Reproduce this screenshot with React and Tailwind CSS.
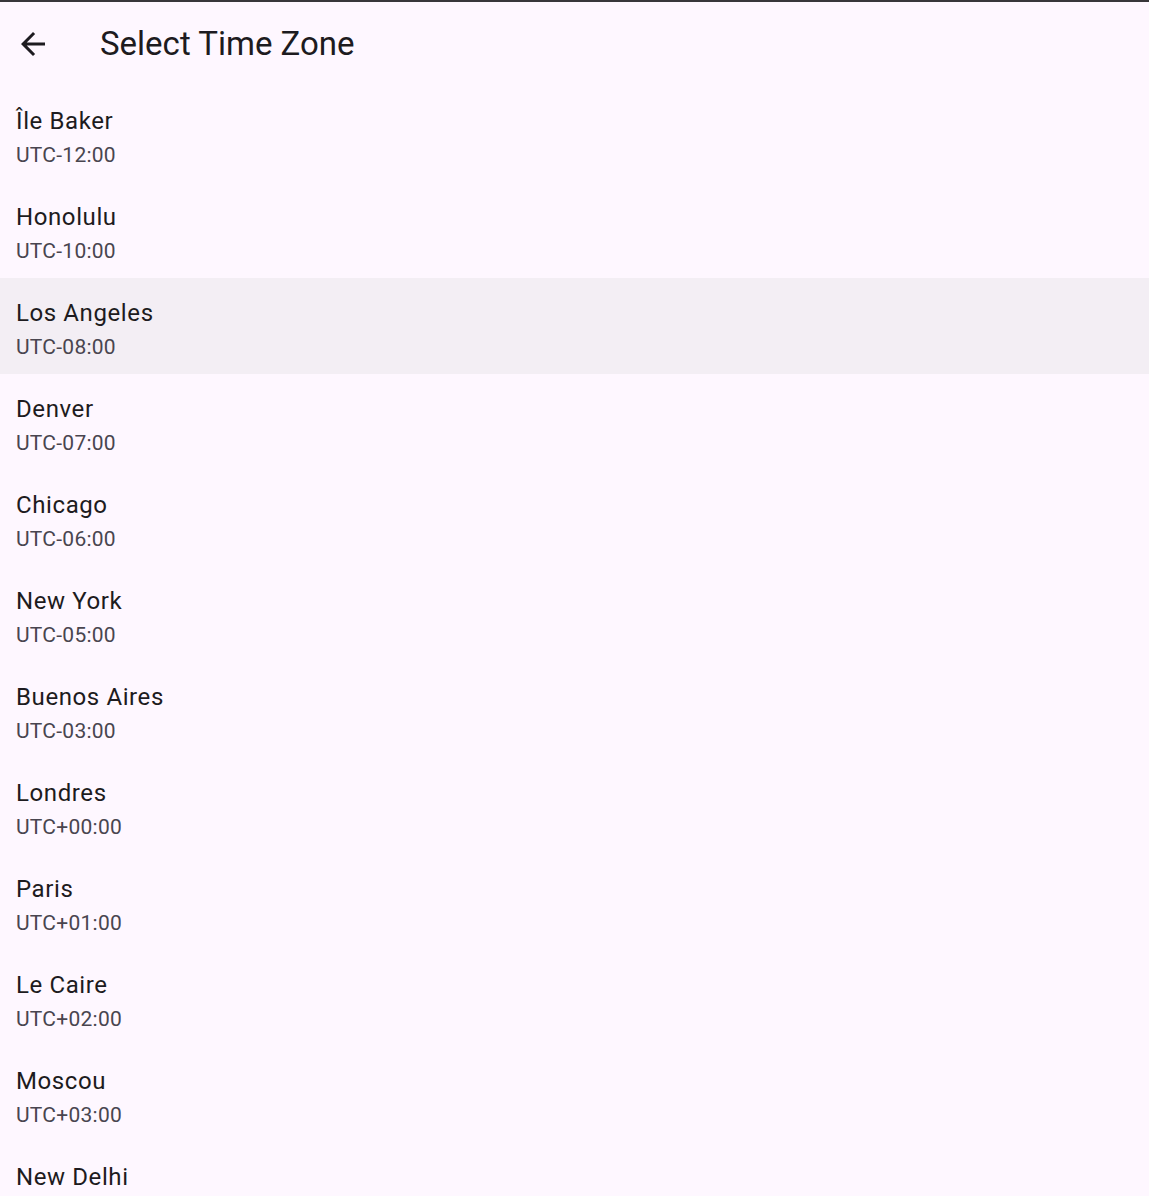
import React from "react";

const zones = [
  ["Île Baker", "UTC-12:00"],
  ["Honolulu", "UTC-10:00"],
  ["Los Angeles", "UTC-08:00"],
  ["Denver", "UTC-07:00"],
  ["Chicago", "UTC-06:00"],
  ["New York", "UTC-05:00"],
  ["Buenos Aires", "UTC-03:00"],
  ["Londres", "UTC+00:00"],
  ["Paris", "UTC+01:00"],
  ["Le Caire", "UTC+02:00"],
  ["Moscou", "UTC+03:00"],
  ["New Delhi", "UTC+05:30"],
];

export default function App() {
  return (
    <div
      className="w-[1149px] h-[1196px] overflow-hidden bg-[#fef7ff] flex flex-col"
      style={{ fontFamily: "Roboto, 'Noto Sans', sans-serif" }}
    >
      <div className="h-[2px] bg-[#38363a] shrink-0" />
      <div className="h-[84px] shrink-0 flex items-center pl-[15px]">
        <svg width="36" height="36" viewBox="0 0 24 24" className="text-[#1d1b20]">
          <path
            fill="currentColor"
            d="M20 11H7.83l5.59-5.59L12 4l-8 8 8 8 1.41-1.41L7.83 13H20v-2z"
          />
        </svg>
        <div className="ml-[49px] text-[33px] leading-[44px] text-[#1d1b20]">
          Select Time Zone
        </div>
      </div>
      <div className="flex flex-col">
        {zones.map(([name, off], i) => (
          <div
            key={name}
            className={
              "h-[96px] shrink-0 pl-4 pt-[17px] " +
              (i === 2 ? "bg-[#f3eef4]" : "")
            }
          >
            <div className="text-[24px] leading-[36px] tracking-[0.6px] text-[#1d1b20]">
              {name}
            </div>
            <div className="mt-[1px] text-[21px] leading-[30px] tracking-[0.25px] text-[#49454f]">
              {off}
            </div>
          </div>
        ))}
      </div>
    </div>
  );
}
